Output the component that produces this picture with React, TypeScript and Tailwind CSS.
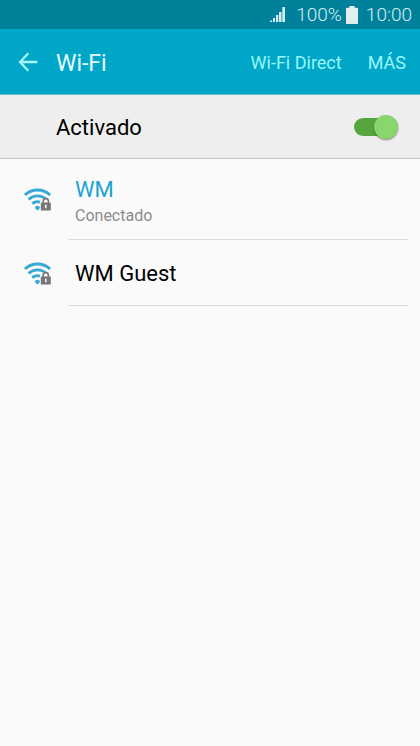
import { useState } from "react";

type Network = { name: string; status?: string };

const networks: Network[] = [
  { name: "WM", status: "Conectado" },
  { name: "WM Guest" },
];

function SignalIcon() {
  return (
    <svg width="16" height="16" viewBox="0 0 16 16" fill="#d5edf0" aria-hidden="true">
      <rect x="0" y="13.500" width="2" height="1.500" />
      <rect x="3" y="11" width="2" height="4" />
      <rect x="6" y="8" width="2.200" height="7" />
      <rect x="9" y="5" width="2.500" height="10" />
      <rect x="12.300" y="0" width="2.700" height="15" />
    </svg>
  );
}

function BatteryIcon() {
  return (
    <svg width="12" height="18" viewBox="0 0 12 18" fill="#e3eeee" aria-hidden="true">
      <path d="M3.500 0h5v1.800H11a1 1 0 0 1 1 1V17a1 1 0 0 1-1 1H1a1 1 0 0 1-1-1V2.800a1 1 0 0 1 1-1h2.500z" />
    </svg>
  );
}

function BackIcon() {
  return (
    <svg width="20" height="20" viewBox="0 0 20 20" fill="none" stroke="#a5f8fa" strokeWidth="2.300" aria-hidden="true">
      <path d="M10.300 1.200 2 10l8.300 8.800M2 10h17.500" />
    </svg>
  );
}

function SecureWifiIcon() {
  return (
    <svg width="28" height="24" viewBox="0 0 28 24" fill="none" aria-hidden="true">
      <g stroke="#36a9d6" strokeWidth="2.900">
        <path d="M.900 7C8.200.300 18.800.300 26.100 7" />
        <path d="M4.600 11.400c5.200-4.700 12.600-4.700 17.800 0" />
        <path d="M8.200 15.700c3.200-2.800 7.400-2.800 10.600 0" />
      </g>
      <path d="M11.900 19.500a2.400 2.400 0 0 1 3.200 0L13.500 21.300z" fill="#36a9d6" stroke="#36a9d6" strokeWidth="2" strokeLinejoin="round" />
      <path d="M15.800 23v-9l2-3.300h7.500l2.300 3.300v9z" fill="#fafafa" />
      <path d="M19.200 15v-1.800a2.600 2.600 0 0 1 5.200 0V15" stroke="#77777b" strokeWidth="1.600" />
      <rect x="16.800" y="14.400" width="10" height="8" rx=".5" fill="#77777b" />
      <path d="M21.800 16.800v3.400" stroke="#fafafa" strokeWidth="1.500" />
    </svg>
  );
}

function StatusBar() {
  return (
    <div className="flex h-[29px] items-center justify-end bg-[#00819b] pt-px pr-2 text-[19px] leading-6 font-light text-[#d5edf0]">
      <SignalIcon />
      <span className="ml-[10px]">100%</span>
      <span className="ml-1">
        <BatteryIcon />
      </span>
      <span className="ml-2">10:00</span>
    </div>
  );
}

function NetworkRow({ network }: { network: Network }) {
  return (
    <li className="pr-3">
      <button type="button" className="flex w-full items-stretch text-left">
        <span className="flex w-[68px] shrink-0 items-center pt-px pl-6">
          <SecureWifiIcon />
        </span>
        <span
          className={`flex flex-1 flex-col justify-center border-b border-[#dcdcdc] pl-[7px] ${network.status ? "h-[81px] pt-1.5" : "h-[66px] pt-0.5"}`}
        >
          <span className={`text-[22px] leading-7 ${network.status ? "text-[#1aa3d0]" : "text-black"}`}>
            {network.name}
          </span>
          {network.status && <span className="text-base leading-6 text-[#8c8c8c]">{network.status}</span>}
        </span>
      </button>
    </li>
  );
}

export default function App() {
  const [enabled, setEnabled] = useState(true);

  return (
    <div className="min-h-screen bg-[#fafafa] font-[Roboto,sans-serif]">
      <StatusBar />

      <header className="flex h-[66px] items-center border-b border-[#5fbfd0] bg-[#00a6c8] pr-[14px] pl-[18px]">
        <button type="button" aria-label="Atrás">
          <BackIcon />
        </button>
        <h1 className="ml-[18px] flex-1 pt-1 text-[23px] leading-7 text-[#e6fdff]">Wi-Fi</h1>
        <button type="button" className="pt-0.5 text-lg leading-6 text-[#98f6fa]">
          Wi-Fi Direct
        </button>
        <button type="button" className="ml-[26px] pt-0.5 text-lg leading-6 text-[#98f6fa]">
          MÁS
        </button>
      </header>

      <main>
        <label className="flex h-16 items-center justify-between border-b border-[#c6c6c6] bg-[#eeeeee] pr-[22px] pl-14">
          <span className="pt-0.5 text-[22px] leading-7 text-black">Activado</span>
          <input
            type="checkbox"
            role="switch"
            checked={enabled}
            onChange={(e) => setEnabled(e.target.checked)}
            className="flex h-[18px] w-11 appearance-none items-center rounded-full bg-[#b0b0b0] before:size-6 before:shrink-0 before:rounded-full before:bg-[#f5f5f5] before:shadow-[0_1px_2px_rgba(0,0,0,0.45)] checked:justify-end checked:bg-[#55a63f] checked:before:bg-[#89d66c]"
          />
        </label>

        <ul>
          {networks.map((network) => (
            <NetworkRow key={network.name} network={network} />
          ))}
        </ul>
      </main>
    </div>
  );
}
